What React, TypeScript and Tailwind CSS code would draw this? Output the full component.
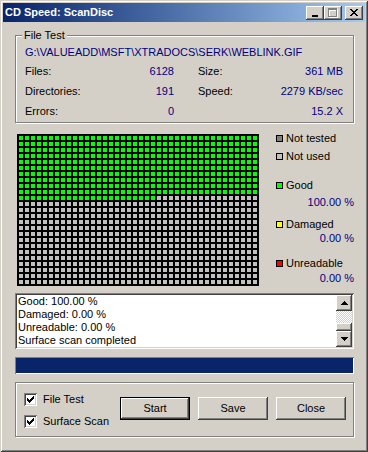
import React from "react";

// tiny pixel glyph helper: '#' = filled pixel
const Pix = ({ rows, color, shadow }: { rows: string[]; color: string; shadow?: string }) => {
  const w = rows[0].length + (shadow ? 1 : 0);
  const h = rows.length + (shadow ? 1 : 0);
  const rects = (fill: string, off: number) =>
    rows.flatMap((r, y) =>
      r.split("").map((c, x) =>
        c === "#" ? <rect key={`${fill}-${x}-${y}`} x={x + off} y={y + off} width={1} height={1} fill={fill} /> : null
      )
    );
  return (
    <svg width={w} height={h} shapeRendering="crispEdges" className="block">
      {shadow && rects(shadow, 1)}
      {rects(color, 0)}
    </svg>
  );
};

const CLOSE = ["##....##", ".##..##.", "..####..", "...##...", "..####..", ".##..##.", "##....##"];
const MAXI = ["#########", "#########", "#.......#", "#.......#", "#.......#", "#.......#", "#.......#", "#.......#", "#########"];
const MINI = ["######", "######"];
const CHECK = ["......#", ".....##", "#...###", "##.###.", "#####..", ".###...", "..#...."];
const UP = ["...#...", "..###..", ".#####.", "#######"];
const DOWN = ["#######", ".#####.", "..###..", "...#..."];

const TitleButton = ({ children, className }: { children: React.ReactNode; className?: string }) => (
  <div
    className={`w-[18px] h-[14px] bg-[#d4d0c8] flex shadow-[inset_-1px_-1px_0_#404040,inset_1px_1px_0_#ffffff,inset_-2px_-2px_0_#808080] ${className ?? ""}`}
  >
    {children}
  </div>
);

const Checkbox = ({ label }: { label: string }) => (
  <div className="h-[13px] flex items-center gap-[6px]">
    <div className="w-[13px] h-[13px] bg-white flex items-center justify-center shadow-[inset_1px_1px_0_#808080,inset_-1px_-1px_0_#ffffff,inset_2px_2px_0_#404040,inset_-2px_-2px_0_#d4d0c8]">
      <Pix rows={CHECK} color="#000000" />
    </div>
    <span>{label}</span>
  </div>
);

const Button = ({ label, isDefault }: { label: string; isDefault?: boolean }) => (
  <div
    className={`w-[70px] h-[23px] flex items-center justify-center ${
      isDefault ? "border border-black" : ""
    }`}
  >
    <div className="w-full h-full flex items-center justify-center shadow-[inset_-1px_-1px_0_#404040,inset_1px_1px_0_#ffffff,inset_-2px_-2px_0_#808080]">
      {label}
    </div>
  </div>
);

const LegendItem = ({ color, label, className }: { color: string; label: string; className?: string }) => (
  <div className={`h-[14px] flex items-center gap-[3px] ${className ?? ""}`}>
    <span className={`w-[7px] h-[7px] border border-black ${color}`} />
    <span>{label}</span>
  </div>
);

const StatRow = ({ label, value }: { label: string; value: string }) => (
  <div className="flex items-center justify-between">
    <span>{label}</span>
    <span className="text-[#000080]">{value}</span>
  </div>
);

export default function App() {
  const cells = Array.from({ length: 1000 }, (_, i) => i < 423);

  return (
    <div className="w-[368px] h-[452px] bg-[#d4d0c8] p-[3px] flex flex-col text-[11px] leading-[13px] text-black [font-family:'Liberation_Sans',Arial,sans-serif] shadow-[inset_1px_1px_0_#d4d0c8,inset_-1px_-1px_0_#404040,inset_2px_2px_0_#ffffff,inset_-2px_-2px_0_#808080]">
      {/* title bar */}
      <div className="h-[19px] flex items-center justify-between bg-linear-to-r from-[#0a246a] to-[#a6caf0] pl-[2px] pr-[2px]">
        <span className="font-bold text-white">CD Speed: ScanDisc</span>
        <div className="flex items-center">
          <TitleButton className="items-end justify-start pl-[6px] pb-[3px]">
            <Pix rows={MINI} color="#000000" />
          </TitleButton>
          <TitleButton className="items-start justify-start pl-[4px] pt-[2px]">
            <Pix rows={MAXI} color="#808080" shadow="#ffffff" />
          </TitleButton>
          <TitleButton className="ml-[3px] items-center justify-center">
            <Pix rows={CLOSE} color="#000000" />
          </TitleButton>
        </div>
      </div>

      <div className="flex flex-col pl-[12px] pr-[11px]">
        {/* File Test group */}
        <div className="relative mt-[13px] h-[88px] border border-[#808080] shadow-[inset_1px_1px_0_#ffffff,1px_1px_0_#ffffff] pt-[9px] pl-[9px] pr-[9px]">
          <span className="absolute -top-[8px] left-[6px] px-[2px] bg-[#d4d0c8] leading-[14px]">File Test</span>
          <div className="h-[14px] leading-[14px] text-[#000080]">{"G:\\VALUEADD\\MSFT\\XTRADOCS\\SERK\\WEBLINK.GIF"}</div>
          <div className="mt-[2px] grid grid-cols-[149px_145px] gap-x-[24px] auto-rows-[20px]">
            <StatRow label="Files:" value="6128" />
            <StatRow label="Size:" value="361 MB" />
            <StatRow label="Directories:" value="191" />
            <StatRow label="Speed:" value="2279 KB/sec" />
            <StatRow label="Errors:" value="0" />
            <StatRow label="" value="15.2 X" />
          </div>
        </div>

        {/* surface map + legend */}
        <div className="mt-[11px] flex items-start">
          <div className="ml-[2px] bg-black p-[2px] grid grid-cols-[repeat(40,4px)] auto-rows-[4px] gap-[2px]">
            {cells.map((good, i) => (
              <div key={i} className={good ? "bg-[#00ff00]" : "bg-[#c0c0c0]"} />
            ))}
          </div>
          <div className="ml-[17px] w-[78px] -mt-[3px] flex flex-col">
            <LegendItem color="bg-[#808080]" label="Not tested" />
            <LegendItem className="mt-[4px]" color="bg-[#c0c0c0]" label="Not used" />
            <LegendItem className="mt-[15px]" color="bg-[#00ff00]" label="Good" />
            <div className="mt-[3px] h-[14px] leading-[14px] text-right text-[#000080]">100.00 %</div>
            <LegendItem className="mt-[8px]" color="bg-[#ffff00]" label="Damaged" />
            <div className="h-[14px] leading-[14px] text-right text-[#000080]">0.00 %</div>
            <LegendItem className="mt-[11px]" color="bg-[#ff0000]" label="Unreadable" />
            <div className="mt-[1px] h-[14px] leading-[14px] text-right text-[#000080]">0.00 %</div>
          </div>
        </div>

        {/* log */}
        <div className="mt-[7px] h-[56px] bg-white flex p-[2px] shadow-[inset_1px_1px_0_#808080,inset_-1px_-1px_0_#ffffff,inset_2px_2px_0_#404040,inset_-2px_-2px_0_#d4d0c8]">
          <div className="flex-1 pl-[1px] leading-[13px]">
            <div>Good: 100.00 %</div>
            <div>Damaged: 0.00 %</div>
            <div>Unreadable: 0.00 %</div>
            <div>Surface scan completed</div>
          </div>
          <div className="w-[16px] flex flex-col">
            <div className="h-[16px] bg-[#d4d0c8] flex items-center justify-center shadow-[inset_-1px_-1px_0_#404040,inset_1px_1px_0_#ffffff,inset_-2px_-2px_0_#808080]">
              <Pix rows={UP} color="#000000" />
            </div>
            <div className="flex-1 bg-[repeating-conic-gradient(#ffffff_0%_25%,#d4d0c8_0%_50%)] bg-[length:2px_2px]" />
            <div className="h-[8px] bg-[#d4d0c8] shadow-[inset_-1px_-1px_0_#404040,inset_1px_1px_0_#ffffff,inset_-2px_-2px_0_#808080]" />
            <div className="h-[16px] bg-[#d4d0c8] flex items-center justify-center shadow-[inset_-1px_-1px_0_#404040,inset_1px_1px_0_#ffffff,inset_-2px_-2px_0_#808080]">
              <Pix rows={DOWN} color="#000000" />
            </div>
          </div>
        </div>

        {/* progress */}
        <div className="mt-[8px] h-[17px] p-[1px] shadow-[inset_1px_1px_0_#808080,inset_-1px_-1px_0_#ffffff]">
          <div className="h-full bg-[#0a246a]" />
        </div>

        {/* options + actions */}
        <div className="mt-[8px] h-[55px] border border-[#808080] shadow-[inset_1px_1px_0_#ffffff,1px_1px_0_#ffffff] flex pt-[10px] pl-[8px]">
          <div className="w-[96px] flex flex-col gap-[9px]">
            <Checkbox label="File Test" />
            <Checkbox label="Surface Scan" />
          </div>
          <div className="mt-[4px] flex gap-[8px]">
            <Button label="Start" isDefault />
            <Button label="Save" />
            <Button label="Close" />
          </div>
        </div>
      </div>
    </div>
  );
}
